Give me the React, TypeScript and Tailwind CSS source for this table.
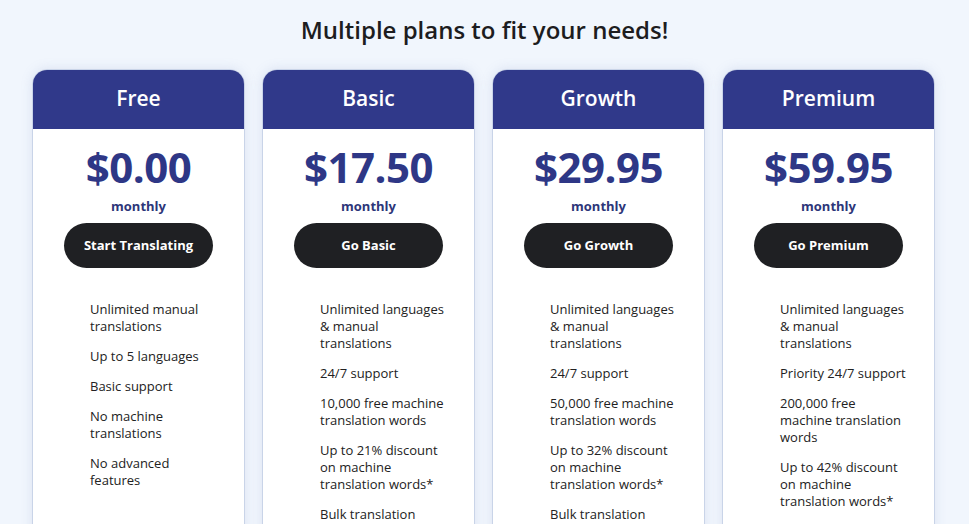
import React from 'react';

type Plan = {
  name: string;
  price: string;
  cta: string;
  features: string[][];
};

const plans: Plan[] = [
  {
    name: 'Free',
    price: '$0.00',
    cta: 'Start Translating',
    features: [
      ['Unlimited manual', 'translations'],
      ['Up to 5 languages'],
      ['Basic support'],
      ['No machine', 'translations'],
      ['No advanced', 'features'],
    ],
  },
  {
    name: 'Basic',
    price: '$17.50',
    cta: 'Go Basic',
    features: [
      ['Unlimited languages', '& manual', 'translations'],
      ['24/7 support'],
      ['10,000 free machine', 'translation words'],
      ['Up to 21% discount', 'on machine', 'translation words*'],
      ['Bulk translation'],
    ],
  },
  {
    name: 'Growth',
    price: '$29.95',
    cta: 'Go Growth',
    features: [
      ['Unlimited languages', '& manual', 'translations'],
      ['24/7 support'],
      ['50,000 free machine', 'translation words'],
      ['Up to 32% discount', 'on machine', 'translation words*'],
      ['Bulk translation'],
    ],
  },
  {
    name: 'Premium',
    price: '$59.95',
    cta: 'Go Premium',
    features: [
      ['Unlimited languages', '& manual', 'translations'],
      ['Priority 24/7 support'],
      ['200,000 free', 'machine translation', 'words'],
      ['Up to 42% discount', 'on machine', 'translation words*'],
      ['Bulk translation'],
    ],
  },
];

const PlanCard = ({ plan }: { plan: Plan }) => (
  <div className="w-[213px] shrink-0 rounded-t-[15px] border border-[#c9d4e8] bg-white shadow-[0_0_12px_rgba(120,140,190,0.18)] overflow-hidden">
    <div className="h-[59px] bg-[#30398a] flex items-center justify-center pb-[3px]">
      <h3 className="text-white text-[21px] font-semibold leading-none">{plan.name}</h3>
    </div>
    <div className="flex flex-col items-center pt-[17px]">
      <div className="text-[#2e3786] text-[42px] font-bold leading-none tracking-[-0.5px]">{plan.price}</div>
      <div className="mt-[10px] text-[#2d3679] text-[13px] font-bold leading-[17px]">monthly</div>
      <button className="mt-[8px] w-[149px] h-[45px] rounded-full bg-[#1f2023] text-white text-[13px] font-bold">
        {plan.cta}
      </button>
    </div>
    <ul className="mt-[33px] ml-[57px] pb-10 flex flex-col gap-[13px] text-[13px] leading-[17px] text-[#222]">
      {plan.features.map((lines, i) => (
        <li key={i}>
          {lines.map((l, j) => (
            <div key={j} className="whitespace-nowrap">{l}</div>
          ))}
        </li>
      ))}
    </ul>
  </div>
);

export default function App() {
  return (
    <div className="h-[524px] bg-[#f1f6fd] font-['Open_Sans',sans-serif] overflow-hidden">
      <h1 className="pt-[15px] text-center text-[24px] font-semibold leading-[30px] text-[#1d1d1f]">
        Multiple plans to fit your needs!
      </h1>
      <div className="mt-[24px] pr-[2px] flex justify-center gap-[17px]">
        {plans.map((p) => (
          <PlanCard key={p.name} plan={p} />
        ))}
      </div>
    </div>
  );
}
